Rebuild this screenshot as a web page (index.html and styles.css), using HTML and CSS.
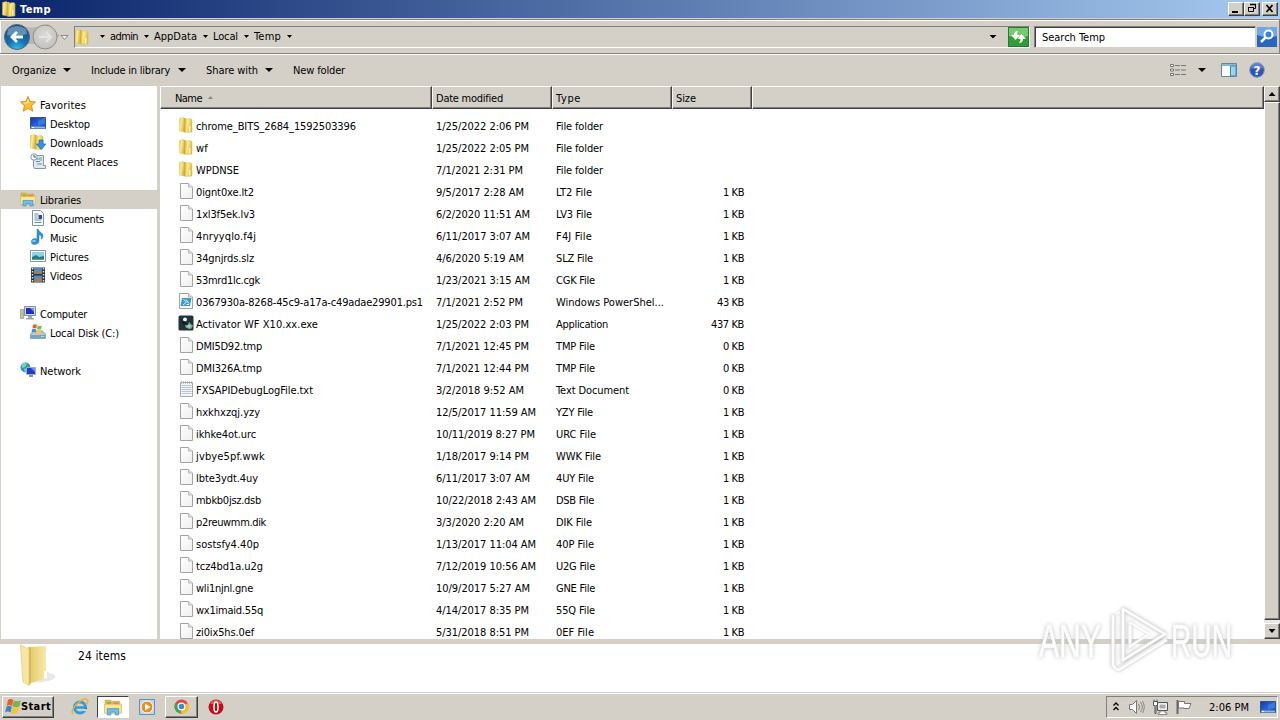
FILE: index.html
```html
<!DOCTYPE html>
<html lang="en">
<head>
<meta charset="utf-8">
<title>Temp</title>
<link rel="stylesheet" href="styles.css">
</head>
<body>
<svg class="defs" width="0" height="0">
<defs>
<linearGradient id="gold" x1="0" x2="1" y1="0" y2="0.4"><stop offset="0" stop-color="#e6c752"/><stop offset=".4" stop-color="#faec98"/><stop offset="1" stop-color="#dcb73c"/></linearGradient>
<linearGradient id="gold2" x1="0" x2="1" y1="0" y2="0"><stop offset="0" stop-color="#cba52f"/><stop offset="1" stop-color="#f0d873"/></linearGradient>
<linearGradient id="paper" x1="0" x2="1" y1="0" y2="1"><stop offset="0" stop-color="#fff"/><stop offset="1" stop-color="#efefef"/></linearGradient>
<linearGradient id="screen" x1="0" x2="1" y1="0" y2="1"><stop offset="0" stop-color="#1b2fae"/><stop offset=".5" stop-color="#2b62d4"/><stop offset="1" stop-color="#164a9e"/></linearGradient>
<radialGradient id="back" cx=".5" cy="1" r=".9"><stop offset="0" stop-color="#35c4ee"/><stop offset=".45" stop-color="#1273b4"/><stop offset="1" stop-color="#1f4d7d"/></radialGradient>
<radialGradient id="fwd" cx=".5" cy=".4" r=".6"><stop offset="0" stop-color="#dcdad6"/><stop offset="1" stop-color="#c3c1bd"/></radialGradient>
<linearGradient id="big" x1="0" x2="1" y1="0" y2="0"><stop offset="0" stop-color="#e3c768"/><stop offset="1" stop-color="#f7e9a6"/></linearGradient>
</defs>
<symbol id="folder" viewBox="0 0 16 16"><path d="M1.500 1.500l4-1 1 1.500v13l-5-1z" fill="url(#gold)" stroke="#dcc05a" stroke-width=".5"/><path d="M8 2.500l4-1 2 1v12.500l-6.500.5z" fill="url(#gold)" stroke="#d9bd55" stroke-width=".5"/><path d="M6 1h2.500v14L6 15.500z" fill="url(#gold2)"/><path d="M11 9h1.500v5.500H11z" fill="#fff6c0"/></symbol>
<symbol id="file" viewBox="0 0 16 16"><path d="M2.500.5h8l4 3.500v11.500h-12z" fill="url(#paper)" stroke="#a3a3a3"/><path d="M10.500.5v3.500h4" fill="#e9e9e9" stroke="#b5b5b5"/></symbol>
<symbol id="txt" viewBox="0 0 16 16"><path d="M2.500 1.500h12v14h-12z" fill="#f3f6f8" stroke="#a3acb2"/><path d="M3.500 4.500h10m-10 2h10m-10 2h10m-10 2h10m-10 2h10" stroke="#a9bac6" stroke-width=".8"/><path d="M3 1.500h11" stroke="#9aa0a4" stroke-width="2" stroke-dasharray="1 1"/></symbol>
<symbol id="ps" viewBox="0 0 16 16"><path d="M1.500.5h9l4 3.500v11.500h-13z" fill="#f8fafb" stroke="#a3a3a3"/><path d="M10.500.5v3.500h4" fill="#e4e4e4" stroke="#b0b0b0"/><path d="M4 5h9.500l-1.500 8H2.500z" fill="#3e9bd0"/><path d="M5.500 6.500l3 2.500-3.500 3M8.500 11.500h2.500M8 6.500l3 4" stroke="#d9f2ff" fill="none"/></symbol>
<symbol id="app" viewBox="0 0 16 16"><rect x=".5" y=".5" width="15" height="15" rx="1.500" fill="#20323e"/><circle cx="7" cy="4.500" r="2" fill="#f3f8f6"/><path d="M3 8l3-2 3 2-1 2z" fill="#0b1c22"/><path d="M11 7l4 4-2 3-5-1-1-3 3 0z" fill="#70a98c"/><path d="M11 9l1 1.500 2 .5-2 1-1 2-1-2-2-1 2-.5z" fill="#a9d4b7"/></symbol>
<symbol id="star" viewBox="0 0 16 16"><path d="M8 .5l2.100 5 5.400.5-4 3.600 1.200 5.600L8 12.300l-4.700 2.900 1.200-5.600L.5 6l5.400-.5z" fill="#ffc12e" stroke="#e08a21"/><path d="M8 3l1.200 3.700-3.700 1.300-2.500-1.300 3.500-.4z" fill="#ffe999"/></symbol>
<symbol id="desk" viewBox="0 0 16 16"><path d="M.5 2.500h15v11H.5z" fill="url(#screen)" stroke="#31568c"/><path d="M1 11.500h14v2H1z" fill="#8fb7dd"/><path d="M8 6l7-3v6l-7 2z" fill="#3f84e4" opacity=".7"/><path d="M2 12.500h2" stroke="#fff"/></symbol>
<symbol id="down" viewBox="0 0 16 16"><use href="#folder" x="-1" width="16" height="16"/><path d="M9 6h4v4h3l-5 5.500L6.500 10H9z" fill="#3494dc" stroke="#1f6aa8" stroke-width=".7"/></symbol>
<symbol id="recent" viewBox="0 0 16 16"><path d="M3.500 2.500h10v10h2v3h-11l-1-2z" fill="#dfe8ee" stroke="#8796a2"/><path d="M6 6h6M6 8.500h4M7 11h5" stroke="#6f8ea5"/><circle cx="4" cy="4" r="3.200" fill="#f0f5f8" stroke="#8a9aa6"/><path d="M4 2v2h2" fill="none" stroke="#4b6274"/><path d="M9 4h3v4h-2z" fill="#9cc2dc"/></symbol>
<symbol id="lib" viewBox="0 0 16 16"><path d="M1 2h5l1 1h7v3H1z" fill="#e8c04b" stroke="#c99a32" stroke-width=".6"/><path d="M2.500 3.500h4v2h-4z" fill="#73b95e"/><path d="M8 4h5v1.500H8z" fill="#e7795c"/><path d="M.5 5.500h15v8H.5z" fill="#f8e694" stroke="#d7b95a" stroke-width=".7"/><path d="M3 15V9.500h10V15h-3v-2.500H6V15z" fill="#6fc0ec" stroke="#3d8fc8" stroke-width=".7"/></symbol>
<symbol id="doc" viewBox="0 0 16 16"><path d="M2.500.5h8l3 3v12h-11z" fill="#fafcfe" stroke="#7b95aa"/><path d="M4.500 4h4m-4 2h3m-3 2h3m-3 2h7m-7 2.500h7" stroke="#6689a8"/><path d="M8.500 5h3.500v4H8.500z" fill="#2c5078"/></symbol>
<symbol id="music" viewBox="0 0 16 16"><path d="M8 0c1 3 5 4 5 7 0 2-1 3-2 3 1-2 0-4-2-4v6c0 2-2 3.500-4.500 3.500S1 14 1.500 12 4 9 7 10V0z" fill="#2e92d0" stroke="#2479b4" stroke-width=".5"/><ellipse cx="4" cy="12" rx="1.800" ry="1" fill="#95d4f3"/></symbol>
<symbol id="pic" viewBox="0 0 16 16"><path d="M.5 2.500h15v11H.5z" fill="#fff" stroke="#85969e"/><path d="M2 4h12v8H2z" fill="#8fd1ec"/><path d="M2 9l4-2 3 2 5-1v4H2z" fill="#247c8c"/><path d="M2 11h12v1H2z" fill="#65a85a"/></symbol>
<symbol id="video" viewBox="0 0 16 16"><path d="M1 .5h14v15H1z" fill="#24333f"/><path d="M4 1h8v6H4zM4 8.500h8V15H4z" fill="#4c8fbf"/><path d="M4 5l3-2 2 2 3-1v3H4zM4 13l4-3 4 2v3H4z" fill="#9b7f66"/><path d="M2.500 1v14m11-14v14" stroke="#e0e5e8" stroke-width="1.500" stroke-dasharray="1.500 1.500"/></symbol>
<symbol id="pc" viewBox="0 0 16 16"><path d="M.5 4.500h3v9h-3z" fill="#b5c59c" stroke="#8b9a83" stroke-width=".7"/><path d="M4.500 1.500h11v9h-11z" fill="#d4d9de" stroke="#8392a1"/><path d="M6 3h8v6H6z" fill="#1e2fc4"/><path d="M10 3h4v4z" fill="#6e96f0"/><path d="M8 11h4v2h2v1.500H6V13h2z" fill="#9aa8b4"/></symbol>
<symbol id="disk" viewBox="0 0 16 16"><path d="M.5 10l3-3h9l3 3v4.500H.5z" fill="#b9c8d3" stroke="#71899c" stroke-width=".7"/><path d="M1 11h14v3H1z" fill="#73a7c5"/><path d="M11 12.500h3" stroke="#a8f0a0"/><path d="M3 1q2-1.500 4 0L6.400 4.500q-2-1.200-4 0z" fill="#ed612e"/><path d="M7.800 1.500q2 1 4 0L11 5q-2 1-4 0z" fill="#77bd3e"/><path d="M2.200 5.300q2-1 4 0L5.500 8.500q-2-1-4 0z" fill="#418ade"/><path d="M7 5.800q2 1 4 0l-.8 3.700q-2 1-4 0z" fill="#fbc638"/></symbol>
<symbol id="net" viewBox="0 0 16 16"><circle cx="5.500" cy="5.500" r="5" fill="#2a9bb4"/><path d="M2 2q3-2 5 0L5 5 2 6zM4 7l3-1 1 3-3 1z" fill="#83d2a6"/><path d="M6.500 5.500h9v7h-9z" fill="#203bd0" stroke="#a2adba"/><path d="M11 6h4v4z" fill="#6d92ec"/><path d="M9 13h4v2H9z" fill="#8496a4"/></symbol>
<symbol id="flag" viewBox="0 0 16 16"><path d="M3 1.500q2.500-2 5.300 0L7 7.500q-2.500-1.800-5.300 0z" fill="#ed5c2a"/><path d="M8.800 2q3 1.500 7 0L14.300 8q-3 1.500-6.800 0z" fill="#73b843"/><path d="M1.500 8.200q2.500-1.800 5.300 0L5.500 14q-2.500-1.800-5.300 0z" fill="#3a83d8"/><path d="M7.300 8.700q3 1.500 6.800 0l-1.500 5.800q-3 1.500-6.800 0z" fill="#fbc230"/></symbol>
</svg>

<header class="titlebar">
<svg class="i16"><use href="#folder"/></svg><b data-w="31">Temp</b>
<div class="winbtns">
<span class="btn"><svg width="14" height="11"><path d="M3 9h6" stroke="#000" stroke-width="2"/></svg></span><span class="btn"><svg width="14" height="11"><path d="M5.500 2v-.5h5v4H9" fill="none" stroke="#000"/><path d="M5 1.500h6" stroke="#000" stroke-width="1.500"/><path d="M3.500 4.500h5v4h-5zM3 4.500h6" fill="none" stroke="#000"/></svg></span><span class="btn last"><svg width="14" height="11"><path d="M3.500 2l6 7m0-7l-6 7" stroke="#000" stroke-width="1.700"/></svg></span>
</div>
</header>

<nav class="address">
<svg class="arrows" width="70" height="30"><path d="M12 2q20 7 36 0l12 12-12 8H12z" fill="#b8b7b3"/><circle cx="17" cy="15" r="12.500" fill="url(#back)" stroke="#4d6880"/><path d="M8 7q9-6 18 0l1 5q-10 3-20 1z" fill="#8fb5d0" opacity=".6"/><path d="M23 15H12m5-5l-5 5 5 5" fill="none" stroke="#fff" stroke-width="2.800"/><circle cx="45" cy="15" r="12" fill="url(#fwd)" stroke="#8e8d8a"/><path d="M39 15h11m-4-5l5 5-5 5" fill="none" stroke="#e6e4e0" stroke-width="2"/><path d="M61 13.500h7l-3.500 4z" fill="#eee" stroke="#888"/></svg>
<div class="crumbs">
<svg class="i16 cf"><use href="#folder"/></svg>
<i class="tri"></i><span data-w="28">admin</span><i class="tri"></i><span data-w="43">AppData</span><i class="tri"></i><span data-w="25">Local</span><i class="tri"></i><span data-w="27">Temp</span><i class="tri"></i>
<i class="tri big end"></i>
</div>
<svg class="refresh" width="21" height="20"><rect x=".5" y=".5" width="20" height="19" fill="#2f9e38" stroke="#237d2b"/><path d="M1 1h19v8q-10 3-19 0z" fill="#76c96f"/><path d="M10 4q-4 0-4 4H3l4.500 5L12 8H9q0-2 1-4zM11 16q4 0 4-4h3l-4.500-5L9.500 12h3q0 2-1.500 4z" fill="#fff"/></svg>
<div class="search"><span data-w="63">Search Temp</span></div>
<svg class="go" width="20" height="20"><rect width="20" height="20" fill="#2866c4"/><path d="M0 0h20v9Q10 12 0 8z" fill="#6fa8e8"/><circle cx="11.500" cy="7.500" r="4" fill="#3d80d4" stroke="#fff" stroke-width="2"/><path d="M8.500 10.500L4 15" stroke="#fff" stroke-width="2.500"/></svg>
</nav>

<div class="toolbar">
<span class="cmd c1"><span data-w="44">Organize</span><i class="tri big"></i></span>
<span class="cmd c2"><span data-w="79">Include in library</span><i class="tri big"></i></span>
<span class="cmd c3"><span data-w="52">Share with</span><i class="tri big"></i></span>
<span class="cmd"><span data-w="52">New folder</span></span>
<div class="tools">
<svg width="16" height="14"><path d="M.5 1.500h3v2h-3zm0 4.500h3v2h-3zm0 4.500h3v2h-3z" fill="#fff" stroke="#777"/><path d="M5 2.500h5m1 0h5M5 7h5m1 0h5M5 11.500h5m1 0h5" stroke="#777"/></svg>
<i class="tri big"></i>
<svg class="pane" width="16" height="14"><path d="M.5.5h15v13H.5z" fill="#fff" stroke="#6d8494"/><path d="M1 2h14" stroke="#86b9d8" stroke-width="2"/><path d="M9.500 3h5.500v10H9.500z" fill="#9bd4ee" stroke="#4289b2"/></svg>
<svg class="help" width="16" height="16"><circle cx="8" cy="8" r="7.300" fill="#2c55bc" stroke="#8996b2"/><path d="M2 6a6 6 0 0 1 12 0q-6 2-12 0z" fill="#7b9be0" opacity=".6"/><text x="8" y="12.500" text-anchor="middle" fill="#fff">?</text></svg>
</div>
</div>

<main class="main">
<aside class="side">
<div class="node"><svg class="i16"><use href="#star"/></svg><span data-w="46">Favorites</span></div>
<div class="node sub"><svg class="i16"><use href="#desk"/></svg><span data-w="40">Desktop</span></div>
<div class="node sub"><svg class="i16"><use href="#down"/></svg><span data-w="53">Downloads</span></div>
<div class="node sub"><svg class="i16"><use href="#recent"/></svg><span data-w="68">Recent Places</span></div>
<div class="node sel gap"><svg class="i16"><use href="#lib"/></svg><span data-w="41">Libraries</span></div>
<div class="node sub"><svg class="i16"><use href="#doc"/></svg><span data-w="54">Documents</span></div>
<div class="node sub"><svg class="i16"><use href="#music"/></svg><span data-w="27">Music</span></div>
<div class="node sub"><svg class="i16"><use href="#pic"/></svg><span data-w="39">Pictures</span></div>
<div class="node sub"><svg class="i16"><use href="#video"/></svg><span data-w="32">Videos</span></div>
<div class="node gap"><svg class="i16"><use href="#pc"/></svg><span data-w="47">Computer</span></div>
<div class="node sub"><svg class="i16"><use href="#disk"/></svg><span data-w="69">Local Disk (C:)</span></div>
<div class="node gap"><svg class="i16"><use href="#net"/></svg><span data-w="41">Network</span></div>
</aside>
<section class="files">
<div class="head"><div class="h name"><span data-w="27">Name</span><i class="sort"></i></div><div class="h"><span data-w="67">Date modified</span></div><div class="h"><span data-w="25">Type</span></div><div class="h size"><span data-w="20">Size</span></div><div class="h rest"></div></div>
<div class="rows" id="rows"></div>
</section>
<div class="scroll"><span class="sb"><i class="arrow-up"></i></span><span class="thumb"></span><span class="track"></span><span class="sb"><i class="tri"></i></span></div>
</main>

<footer class="details">
<svg width="42" height="42"><path d="M26 27l10 4q2 4-7 6l-10 2z" fill="#d2d2ce" opacity=".5"/><path d="M9 3l18-1v33l-15 4z" fill="url(#big)"/><path d="M1.500 1l8.500 4v36.500L4 38z" fill="#f7e6a4" stroke="#e3c977" stroke-width=".7"/><path d="M10 5l2-2v36l-2 2.500z" fill="#d9b957"/><path d="M25 27h3v7l-3 1z" fill="#fff"/></svg>
<span data-w="48">24 items</span>
<svg class="mark" width="210" height="80"><g class="ln glow"><path d="M78 13v52M88 7l42 25-42 26zM95 20v26M82 68l49-31"/></g><g class="ln core"><path d="M78 13v47q0 7 6 8l48-30M88 7l42 25-42 26zM81 12l4-2M94 20l20 12-20 13"/></g><g class="wm glow"><text x="4" y="55" textLength="62" lengthAdjust="spacingAndGlyphs">ANY</text><text x="136" y="55" textLength="61" lengthAdjust="spacingAndGlyphs">RUN</text></g></svg>
</footer>

<div class="taskbar">
<div class="task start"><svg width="16" height="17"><use href="#flag" width="16" height="17"/></svg><b data-w="30">Start</b></div>
<div class="task flat"><svg width="18" height="18"><circle cx="9" cy="9.500" r="5.500" fill="none" stroke="#319bdb" stroke-width="3"/><path d="M4 9.500h11" stroke="#319bdb" stroke-width="2.500"/><path d="M11 12h6v-2" stroke="#d4d0c8" stroke-width="2"/><path d="M2 16Q-1 12 7 5T17 3q0 1-2 4" fill="none" stroke="#e3b33b" stroke-width="1.500"/></svg></div>
<div class="task active"><svg width="18" height="18"><use href="#lib" width="18" height="18"/></svg></div>
<div class="task flat wmp"><svg width="16" height="16"><path d="M.5.5h15v15H.5z" fill="#b9d9ee" stroke="#5794c2"/><circle cx="8" cy="8" r="6" fill="#f38a1b" stroke="#fff"/><path d="M6 4.500L11.500 8 6 11.500z" fill="#fff"/></svg></div>
<div class="task raised"><svg width="15" height="15"><circle cx="7.500" cy="7.500" r="7" fill="#e8453c"/><path d="M7.500 7.500L1.400 4A7 7 0 0 0 7 14.500z" fill="#3aa757"/><path d="M7.500 7.500l6.500-3.500A7 7 0 0 1 7 14.500z" fill="#fbc116"/><circle cx="7.500" cy="7.500" r="3.400" fill="#3f84e6" stroke="#fff" stroke-width="1.200"/></svg></div>
<div class="task opera"><svg width="16" height="16"><circle cx="8" cy="8" r="7.500" fill="#bd1119"/><path d="M2 5a6.500 6.500 0 0 1 12 0z" fill="#dd5757"/><ellipse cx="8" cy="8" rx="2" ry="5" fill="#ab1016" stroke="#fff" stroke-width="1.500"/></svg></div>
<div class="tray">
<svg class="chev" width="6" height="9"><path d="M.5 3.500L3 1l2.500 2.500M.5 8L3 5.500 5.500 8" fill="none" stroke="#000" stroke-width="1.300"/></svg>
<svg width="17" height="16"><path d="M1.500 5.500h3l4-4v13l-4-4h-3z" fill="#fff" stroke="#777"/><path d="M10.500 5q2 3 0 6M12.500 3q3.500 5 0 10M14.500 2q3.500 6 0 12" fill="none" stroke="#888"/></svg>
<svg width="17" height="16"><path d="M5.500 3.500h10v8h-10z" fill="#ddd" stroke="#555"/><path d="M7 5h7v5H7z" fill="#aaa" stroke="#fff"/><path d="M8 12h5v2h2v1.500H6V14h2z" fill="#fff" stroke="#666" stroke-width=".7"/><path d="M1.500 2.500h4v4H4v8H3v-8H1.500zM2 .5v2m3-2v2" fill="#fff" stroke="#555"/></svg>
<svg width="17" height="16"><path d="M1.500 1v14" stroke="#666" stroke-width="2"/><path d="M2.500 2.500h6v2h6.500l-2 5H8V9H2.500z" fill="#fff" stroke="#777"/></svg>
<span class="clock" data-w="40">2:06 PM</span>
<svg class="i16"><use href="#desk"/></svg>
</div>
</div>
<script src="app.js"></script>
</body>
</html>
```
FILE: styles.css
```css
* { box-sizing: border-box; }
body { margin: 0; width: 1280px; height: 720px; overflow: hidden; display: flex; flex-direction: column; background: #d4d0c8; color: #000; font: 11px/14px "DejaVu Sans Condensed", "DejaVu Sans", sans-serif; font-stretch: condensed; white-space: nowrap; }
.defs { position: absolute; }
svg { display: block; flex: none; }
.i16 { width: 16px; height: 16px; }
[data-w] { display: inline-block; flex: none; }

.titlebar { height: 18px; display: flex; align-items: center; padding: 0 2px 0 1px; background: linear-gradient(90deg, #0a246a, #a6caf0); color: #fff; }
.titlebar b { margin-left: 3px; padding-top: 1px; font-family: "DejaVu Sans"; }
.winbtns { margin-left: auto; display: flex; }
.btn { width: 16px; height: 14px; border: 1px solid; border-color: #fff #404040 #404040 #fff; background: #d4d0c8; box-shadow: inset -1px -1px #808080; }
.last { margin-left: 2px; }

.address { height: 35px; display: flex; align-items: center; border: 1px solid #808080; border-width: 1px 1px 1px 0; margin-top: 1px; padding: 0 1px; box-shadow: inset 0 1px #fff, inset 1px 0 #fff, 0 1px #fff; }
.arrows { margin: 0 3px 0 -1px; }
.crumbs { width: 956px; height: 22px; display: flex; align-items: center; border: 1px solid; border-color: #808080 #fff #fff #808080; padding-right: 32px; margin-left: 1px; }
.crumbs .tri { margin: 0 5px 0 6px; }
.crumbs .cf { margin: 0 4px 0 -1px; }
.crumbs .tri.end { margin: 0 0 0 auto; }
.tri { flex: none; width: 5px; height: 3px; background: #000; clip-path: polygon(0 0, 100% 0, 50% 100%); }
.tri.big { width: 8px; height: 4px; }
.refresh { margin-left: -22px; }
.search { width: 222px; height: 22px; margin-left: 5px; padding: 4px 7px; background: #fff; border: 1px solid; border-color: #808080 #d4d0c8 #d4d0c8 #808080; box-shadow: inset 1px 1px #404040; }
.go { margin-left: 1px; }

.toolbar { height: 32px; display: flex; align-items: center; padding-left: 12px; }
.cmd { display: flex; align-items: center; gap: 8px; }
.cmd > span { padding-top: 2px; }
.c1 { gap: 7px; margin-right: 20px; }
.c2 { margin-right: 20px; }
.c3 { gap: 7px; margin-right: 20px; }
.tools { margin-left: auto; display: flex; align-items: center; padding-right: 15px; }
.tools .tri { margin: 0 15px 0 12px; }
.help { margin-left: 12px; }
.help text { font: bold 12px "DejaVu Sans"; }

.main { height: 553px; display: flex; }
.side { width: 158px; padding-top: 9px; background: #fff; border-left: 1px solid #d4d0c8; border-right: 1px solid #d4d0c8; }
.node { height: 19px; display: flex; align-items: center; padding-left: 19px; gap: 4px; }
.node > span { padding-top: 3px; }
.node > svg { margin-top: -1px; }
.sub { padding-left: 29px; }
.gap { margin-top: 19px; }
.sel { background: #d4d0c8; }
.files { width: 1104px; margin-left: 2px; background: #fff; overflow: hidden; }
.head { height: 23px; display: flex; }
.h { width: 120px; padding: 5px 3px; background: #d4d0c8; border: 1px solid; border-color: #fff #404040 #404040 #fff; box-shadow: inset -1px -1px #808080; }
.h.name { width: 272px; padding-left: 14px; display: flex; }
.h.size { width: 80px; }
.h.rest { flex: 1; }
.sort { width: 5px; height: 3px; margin: 4px 6px; background: #888; clip-path: polygon(50% 0, 100% 100%, 0 100%); }
.rows { padding-top: 5px; }
.row { height: 22px; display: grid; grid-template-columns: 258px 120px 120px 68px; padding-left: 18px; align-items: center; }
.row [data-w] { padding-top: 4px; }
.row .n { display: flex; align-items: center; gap: 2px; }
.row .s { justify-self: end; }
.scroll { width: 16px; display: flex; flex-direction: column; background: #e9e7e3; }
.sb { height: 16px; display: grid; place-items: center; border: 1px solid; border-color: #fff #404040 #404040 #fff; background: #d4d0c8; box-shadow: inset -1px -1px #808080; }
.sb .tri, .arrow-up { width: 7px; height: 4px; }
.arrow-up { background: #000; clip-path: polygon(50% 0, 100% 100%, 0 100%); }
.thumb { height: 518px; background: #d4d0c8; border: 1px solid; border-color: #fff #404040 #404040 #fff; box-shadow: inset -1px -1px #808080; }
.track { flex: 1; }

.details { height: 53px; display: flex; border-top: 5px solid #d4d0c8; background: #fff; padding-left: 19px; position: relative; }
.details > span { font-size: 12px; margin: 5px 0 0 17px; }
.mark { position: absolute; left: 1035px; top: -42px; overflow: visible; }
.ln { fill: none; stroke: #fdfdfd; stroke-width: 3; stroke-linejoin: round; }
.glow { filter: drop-shadow(0 0 2px #bbb); }
.core { stroke-width: 2.500; filter: drop-shadow(0 0 1px #ccc); }
.wm { font: 46px "Liberation Sans Narrow", "Liberation Sans"; fill: #fdfdfd; stroke: #fdfdfd; stroke-width: .6; }

.taskbar { height: 28px; display: flex; align-items: center; border-top: 1px solid #d4d0c8; box-shadow: inset 0 1px #fff; padding: 1px 2px; background: #d4d0c8; }
.task { height: 22px; display: flex; align-items: center; justify-content: center; }
.start { width: 52px; border: 1px solid; border-color: #fff #404040 #404040 #fff; box-shadow: inset -1px -1px #808080; }
.start b { font-family: "DejaVu Sans"; padding-top: 1px; }
.flat { width: 34px; margin-left: 9px; }
.active { width: 32px; background: #fff; border: 1px solid; border-color: #404040 #fff #fff #404040; }
.wmp { margin: 0; width: 36px; }
.raised { width: 33px; border: 1px solid; border-color: #fff #404040 #404040 #fff; box-shadow: inset -1px -1px #808080; }
.opera { width: 35px; }
.tray { width: 172px; height: 22px; margin-left: auto; display: flex; align-items: center; gap: 7px; border: 1px solid; border-color: #808080 #fff #fff #808080; padding-left: 6px; }
.chev { margin-right: 2px; }
.clock { margin-left: 9px; margin-right: 4px; padding-top: 2px; }
```
FILE: app.js
```js
// icon, name, name width, date, date width, type, type width, size
const files = [
  ['folder', 'chrome_BITS_2684_1592503396', 160, '1/25/2022 2:06 PM', 93, 'File folder', 47, ''],
  ['folder', 'wf', 12, '1/25/2022 2:05 PM', 93, 'File folder', 47, ''],
  ['folder', 'WPDNSE', 43, '7/1/2021 2:31 PM', 87, 'File folder', 47, ''],
  ['file', '0ignt0xe.lt2', 58, '9/5/2017 2:28 AM', 88, 'LT2 File', 36, '1 KB'],
  ['file', '1xl3f5ek.lv3', 59, '6/2/2020 11:51 AM', 94, 'LV3 File', 36, '1 KB'],
  ['file', '4nryyqlo.f4j', 60, '6/11/2017 3:07 AM', 94, 'F4J File', 36, '1 KB'],
  ['file', '34gnjrds.slz', 58, '4/6/2020 5:19 AM', 88, 'SLZ File', 37, '1 KB'],
  ['file', '53mrd1lc.cgk', 64, '1/23/2021 3:15 AM', 94, 'CGK File', 39, '1 KB'],
  ['ps', '0367930a-8268-45c9-a17a-c49adae29901.ps1', 227, '7/1/2021 2:52 PM', 87, 'Windows PowerShel...', 108, '43 KB'],
  ['app', 'Activator WF X10.xx.exe', 122, '1/25/2022 2:03 PM', 93, 'Application', 52, '437 KB'],
  ['file', 'DMI5D92.tmp', 66, '7/1/2021 12:45 PM', 93, 'TMP File', 39, '0 KB'],
  ['file', 'DMI326A.tmp', 66, '7/1/2021 12:44 PM', 93, 'TMP File', 39, '0 KB'],
  ['txt', 'FXSAPIDebugLogFile.txt', 117, '3/2/2018 9:52 AM', 88, 'Text Document', 73, '0 KB'],
  ['file', 'hxkhxzqj.yzy', 64, '12/5/2017 11:59 AM', 100, 'YZY File', 37, '1 KB'],
  ['file', 'ikhke4ot.urc', 60, '10/11/2019 8:27 PM', 99, 'URC File', 40, '1 KB'],
  ['file', 'jvbye5pf.wwk', 69, '1/18/2017 9:14 PM', 93, 'WWK File', 45, '1 KB'],
  ['file', 'lbte3ydt.4uy', 62, '6/11/2017 3:07 AM', 94, '4UY File', 38, '1 KB'],
  ['file', 'mbkb0jsz.dsb', 65, '10/22/2018 2:43 AM', 100, 'DSB File', 38, '1 KB'],
  ['file', 'p2reuwmm.dik', 70, '3/3/2020 2:20 AM', 88, 'DIK File', 36, '1 KB'],
  ['file', 'sostsfy4.40p', 63, '1/13/2017 11:04 AM', 100, '40P File', 38, '1 KB'],
  ['file', 'tcz4bd1a.u2g', 67, '7/12/2019 10:56 AM', 100, 'U2G File', 39, '1 KB'],
  ['file', 'wli1njnl.gne', 57, '10/9/2017 5:27 AM', 94, 'GNE File', 39, '1 KB'],
  ['file', 'wx1imaid.55q', 67, '4/14/2017 8:35 PM', 93, '55Q File', 39, '1 KB'],
  ['file', 'zi0ix5hs.0ef', 58, '5/31/2018 8:51 PM', 93, '0EF File', 38, '1 KB'],
];
const sizeWidth = { '1 KB': 21, '0 KB': 21, '43 KB': 27, '437 KB': 33 };
document.getElementById('rows').innerHTML = files.map(([icon, n, nw, d, dw, t, tw, s]) =>
  `<div class="row"><div class="n"><svg class="i16"><use href="#${icon}"/></svg><span data-w="${nw}">${n}</span></div>` +
  `<span data-w="${dw}">${d}</span><span data-w="${tw}">${t}</span>` +
  (s ? `<span class="s" data-w="${sizeWidth[s]}">${s}</span>` : '<span></span>') + '</div>').join('');

// Track each label so that it fills its own width.
for (const el of document.querySelectorAll('[data-w]')) {
  el.style.justifySelf = el.classList.contains('s') ? 'end' : 'start';
  const target = +el.dataset.w;
  const natural = el.getBoundingClientRect().width;
  el.style.letterSpacing = (target - natural) / el.textContent.length + 'px';
  el.style.width = target + 'px';
}
```
